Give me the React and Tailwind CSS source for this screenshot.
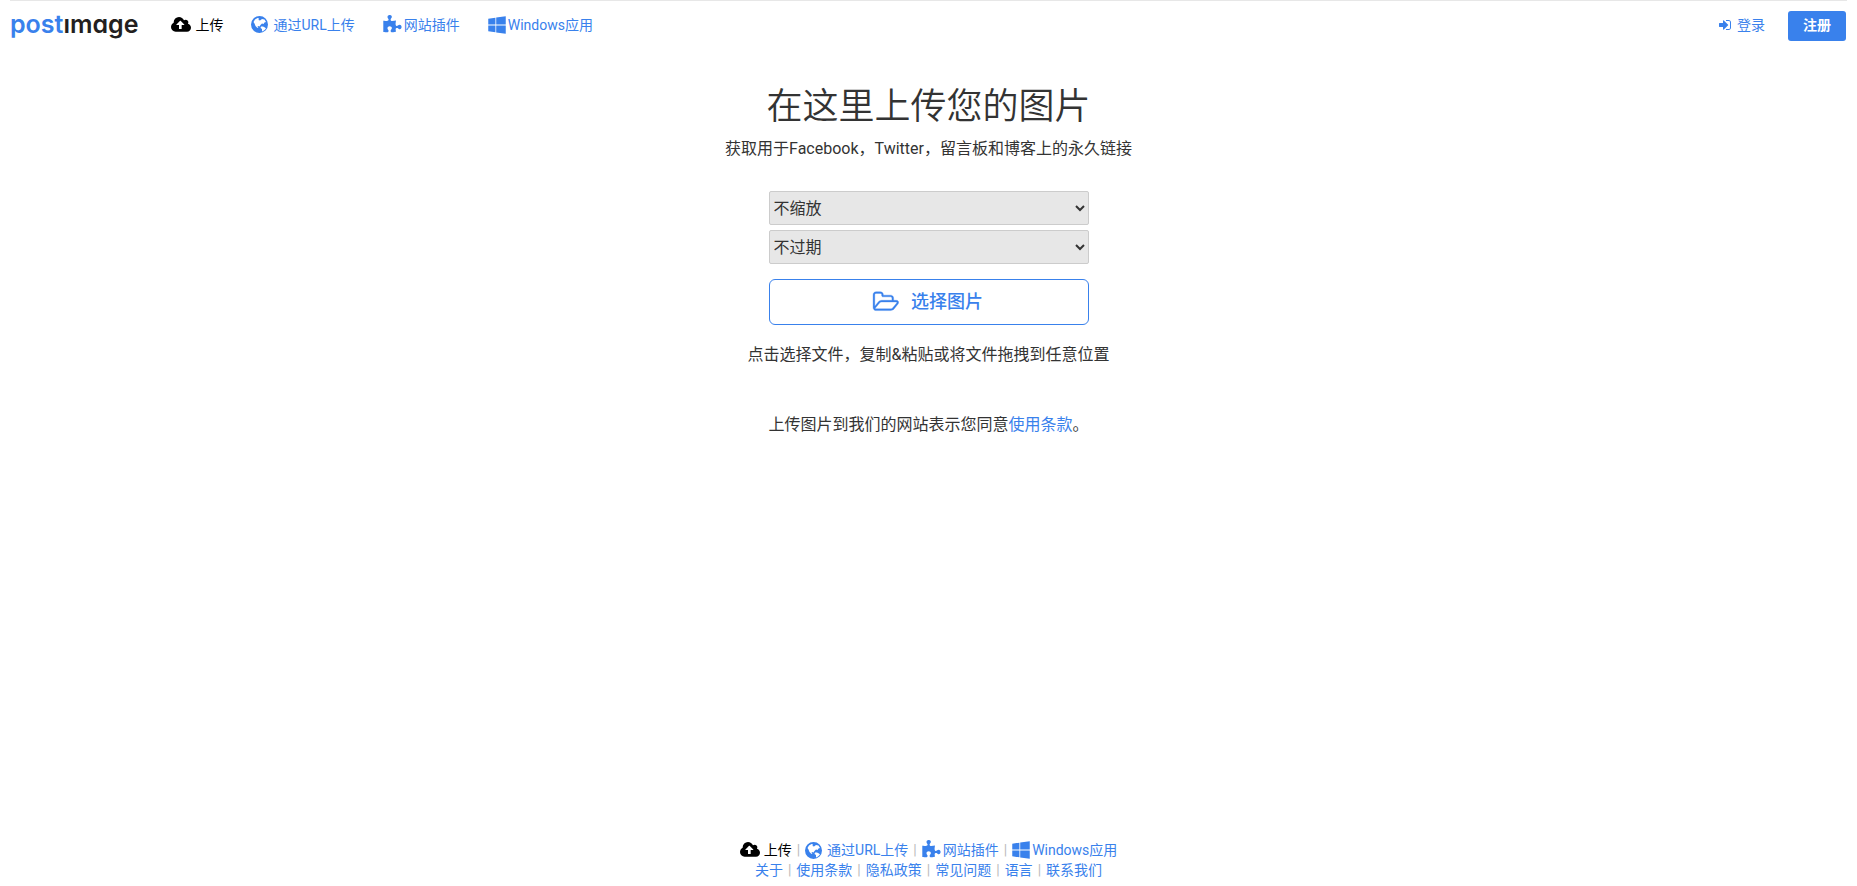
import React from 'react';
import { FaWindows } from 'react-icons/fa';

function CloudUploadIcon({ className }) {
  return (
    <svg className={className} viewBox="0 0 1920 1792" fill="currentColor" aria-hidden="true">
      <path d="M1280 864q0-14-9-23l-352-352q-9-9-23-9t-23 9l-351 351q-10 12-10 24 0 14 9 23t23 9h224v352q0 13 9.5 22.5t22.5 9.5h192q13 0 22.5-9.5t9.5-22.5v-352h224q13 0 22.5-9.5t9.5-22.5zm640 288q0 159-112.5 271.5t-271.5 112.5h-1088q-185 0-316.5-131.5t-131.5-316.5q0-130 70-240t188-165q-2-30-2-43 0-212 150-362t362-150q156 0 285.5 87t188.5 231q71-62 166-62 106 0 181 75t75 181q0 76-41 138 130 31 213.5 135.5t83.5 238.5z" />
    </svg>
  );
}

function GlobeIcon({ className }) {
  return (
    <svg className={className} viewBox="0 0 34 34" fill="currentColor" aria-hidden="true">
      <path
        fillRule="evenodd"
        d="M17 0a17 17 0 1 0 0 34a17 17 0 1 0 0-34zM8 7l5-3 3 1-1 3 3 1 4-3 5 1 3 5-3 1-2 3-3-1-3 3-2 3-3-1-1 2 2 2-2 0-4-4-2-5-2-3zM20 21l4 0 4 2 2 2-3 3-4 3-1-1 0-4-3-2z"
      />
    </svg>
  );
}

function PuzzleIcon({ className }) {
  return (
    <svg className={className} viewBox="64 0 1728 1792" fill="currentColor" aria-hidden="true">
      <path d="M1755 1083q0 81-44.5 135t-123.5 54q-41 0-77.5-17.5t-59-38-56.5-38-71-17.5q-110 0-110 124 0 39 16 115t15 115v5q-22 0-33 1-34 3-97.5 11.5t-115.5 13.5-98 5q-61 0-103-26.5t-42-83.5q0-37 17.5-71t38-56.5 38-59 17.5-77.5q0-79-54-123.5t-135-44.5q-84 0-143 45.5t-59 127.5q0 43 15 83t33.5 64.5 33.5 53 15 50.5q0 45-46 89-37 35-117 35-95 0-245-24-9-2-27.5-4t-27.5-4l-13-2q-1 0-3-1-2 0-2-1v-1024q2 1 17.5 3.5t34 5 21.5 3.5q150 24 245 24 80 0 117-35 46-44 46-89 0-22-15-50.5t-33.5-53-33.5-64.5-15-83q0-82 59-127.5t144-45.5q80 0 134 44.5t54 123.5q0 41-17.5 77.5t-38 59-38 56.5-17.5 71q0 57 42 83.5t103 26.5q64 0 180-15t163-17v2q-1 2-3.5 17.5t-5 34-3.5 21.5q-24 150-24 245 0 80 35 117 44 46 89 46 22 0 50.5-15t53-33.5 64.5-33.5 83-15q82 0 127.5 59t45.5 143z" />
    </svg>
  );
}

function SignInIcon({ className }) {
  return (
    <svg className={className} viewBox="128 0 1536 1792" fill="currentColor" aria-hidden="true">
      <path d="M1312 896q0 26-19 45l-544 544q-19 19-45 19t-45-19-19-45v-288h-448q-26 0-45-19t-19-45v-384q0-26 19-45t45-19h448v-288q0-26 19-45t45-19 45 19l544 544q19 19 19 45zm352-352v704q0 119-84.5 203.5t-203.5 84.5h-320q-13 0-22.5-9.5t-9.5-22.5q0-4-1-20t-.5-26.5 3-23.5 10-19.5 20.5-6.5h320q66 0 113-47t47-113v-704q0-66-47-113t-113-47h-312l-11.5-1-11.5-3-8-5.5-7-9-2-13.5q0-4-1-20t-.5-26.5 3-23.5 10-19.5 20.5-6.5h320q119 0 203.5 84.5t84.5 203.5z" />
    </svg>
  );
}

function FolderOpenIcon({ className }) {
  return (
    <svg className={className} viewBox="0 0 1984 1792" fill="currentColor" stroke="currentColor" strokeWidth="24" aria-hidden="true">
      <path d="M1845 931q0-35-53-35h-1088q-40 0-85.5 21.5t-71.5 52.5l-294 363q-18 24-18 40 0 35 53 35h1088q40 0 86-22t71-53l294-363q18-22 18-39zm-1141-163h768v-160q0-40-28-68t-68-28h-576q-40 0-68-28t-28-68v-64q0-40-28-68t-68-28h-320q-40 0-68 28t-28 68v853l256-315q44-53 116-87.5t140-34.5zm1269 163q0 62-46 120l-295 363q-43 53-116 87.5t-140 34.5h-1088q-92 0-158-66t-66-158v-960q0-92 66-158t158-66h320q92 0 158 66t66 158v32h544q92 0 158 66t66 158v160h192q54 0 99 24.5t67 70.5q15 32 15 68z" />
    </svg>
  );
}

const sections = [
  { label: '上传', actif: true, icon: <CloudUploadIcon className="h-5 w-5" />, gap: 'gap-1' },
  { label: '通过URL上传', icon: <GlobeIcon className="h-[17px] w-[17px]" />, gap: 'gap-[5px]' },
  { label: '网站插件', icon: <PuzzleIcon className="h-5 w-[19px]" />, gap: 'gap-0.5' },
  { label: 'Windows应用', icon: <FaWindows className="h-5 w-[18px]" />, gap: 'gap-0.5' },
];

const pages = ['关于', '使用条款', '隐私政策', '常见问题', '语言', '联系我们'];

function SectionLink({ section }) {
  return (
    <a
      href="#"
      className={`flex items-center ${section.gap} ${section.actif ? 'text-black' : 'text-[#3981ec]'}`}
    >
      {section.icon}
      <span>{section.label}</span>
    </a>
  );
}

function Separator() {
  return <span className="px-[5px] text-[#bbb]">|</span>;
}

function Header() {
  return (
    <header className="mx-2.5 flex h-[50px] items-center border-t border-[#e7e7e7] pr-px text-sm">
      <a href="#" className="mr-[33px] pb-1 font-[Inter,sans-serif] text-[25px] leading-7 font-semibold [font-feature-settings:'cv11'] text-[#231f20]">
        <span className="text-[#3981ec]">post</span>ımage
      </a>
      <nav className="flex flex-1 gap-7 pb-0.5">
        {sections.map((s) => <SectionLink key={s.label} section={s} />)}
      </nav>
      <a href="#" className="mr-[23px] flex items-center gap-1.5 pb-0.5 text-[#3981ec]">
        <SignInIcon className="h-3.5 w-3" />
        <span>登录</span>
      </a>
      <button type="button" className="h-[30px] rounded-[3px] bg-[#3981ec] px-[15px] pb-0.5 font-bold text-white">
        注册
      </button>
    </header>
  );
}

function UploadForm() {
  return (
    <form className="flex w-80 flex-col">
      <select aria-label="缩放" className="mb-[5px] h-[34px] rounded-xs border border-[#ccc] bg-[#e7e7e7] text-base">
        <option>不缩放</option>
      </select>
      <select aria-label="过期" className="mb-[15px] h-[34px] rounded-xs border border-[#ccc] bg-[#e7e7e7] text-base">
        <option>不过期</option>
      </select>
      <button type="button" className="flex h-[46px] items-center justify-center gap-3 rounded-md border border-[#3981ec] bg-white pr-0.5 text-lg font-medium text-[#3981ec]">
        <FolderOpenIcon className="h-6 w-[27px]" />
        选择图片
      </button>
    </form>
  );
}

export default function App() {
  return (
    <div className="flex min-h-screen flex-col bg-white font-[Roboto,'Noto_Sans_CJK_SC',sans-serif] text-base text-[#333]">
      <Header />
      <main className="flex flex-1 flex-col items-center pt-[37px]">
        <h1 className="mb-2.5 text-4xl leading-10 font-[350]">在这里上传您的图片</h1>
        <p className="mb-[30px] leading-6">获取用于Facebook，Twitter，留言板和博客上的永久链接</p>
        <UploadForm />
        <p className="mt-[18px] leading-6">点击选择文件，复制&amp;粘贴或将文件拖拽到任意位置</p>
        <p className="mt-[46px] leading-6">
          上传图片到我们的网站表示您同意<a href="#" className="text-[#3981ec]">使用条款</a>。
        </p>
      </main>
      <footer className="flex flex-col items-center pb-1.5 text-sm leading-5">
        <div className="flex">
          {sections.map((s, i) => (
            <React.Fragment key={s.label}>
              {i > 0 && <Separator />}
              <SectionLink section={s} />
            </React.Fragment>
          ))}
        </div>
        <div className="flex">
          {pages.map((p, i) => (
            <React.Fragment key={p}>
              {i > 0 && <Separator />}
              <a href="#" className="text-[#3981ec]">{p}</a>
            </React.Fragment>
          ))}
        </div>
      </footer>
    </div>
  );
}
